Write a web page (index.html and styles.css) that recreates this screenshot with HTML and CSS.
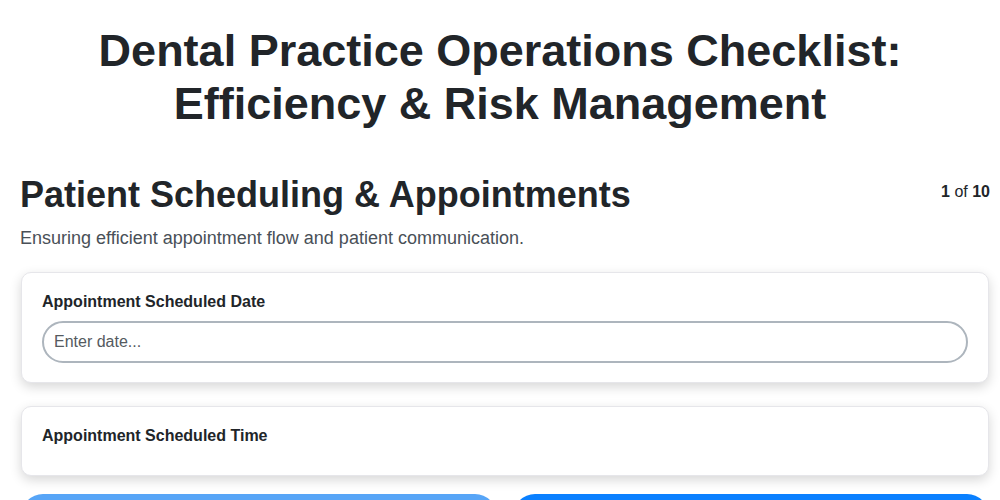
FILE: index.html
```html
<!DOCTYPE html>
<html lang="en">
<head>
<meta charset="utf-8">
<title>Dental Practice Operations Checklist</title>
<link rel="stylesheet" href="styles.css">
</head>
<body>
<div class="page">
  <h1 class="title">Dental Practice Operations Checklist: Efficiency &amp; Risk Management</h1>
  <div class="section-head">
    <h2 class="section-title">Patient Scheduling &amp; Appointments</h2>
    <div class="counter"><b>1</b> of <b>10</b></div>
  </div>
  <p class="section-desc">Ensuring efficient appointment flow and patient communication.</p>
  <div class="card">
    <label class="card-label">Appointment Scheduled Date</label>
    <input class="text-input" type="text" placeholder="Enter date...">
  </div>
  <div class="card card-last">
    <label class="card-label">Appointment Scheduled Time</label>
  </div>
  <div class="nav">
    <button class="btn btn-prev">Previous</button>
    <button class="btn btn-next">Next</button>
  </div>
</div>
</body>
</html>
```
FILE: styles.css
```css
* { box-sizing: border-box; }
body {
  margin: 0;
  font-family: "Liberation Sans", Arial, sans-serif;
  color: #212529;
  background: #fff;
}
.page {
  padding: 24px 10px 20px 20px;
}
.title {
  margin: 0 0 44px -10px;
  text-align: center;
  font-size: 45px;
  line-height: 53px;
  font-weight: 700;
  color: #212529;
}
.section-head {
  display: flex;
  justify-content: space-between;
  align-items: flex-start;
}
.section-title {
  margin: 0;
  font-size: 36px;
  line-height: 42px;
  font-weight: 700;
}
.counter {
  font-size: 16px;
  line-height: 20px;
  padding-top: 8px;
  color: #212529;
}
.section-desc {
  margin: 11px 0 23px 0;
  font-size: 18px;
  line-height: 22px;
  color: #495057;
}
.card {
  display: flex;
  flex-direction: column;
  margin: 0 1px 23px 1px;
  padding: 19px 20px;
  background: #fff;
  border: 1px solid #e6e6ea;
  border-radius: 10px;
  box-shadow: 0 4px 12px rgba(0, 0, 0, 0.16);
}
.card-last {
  padding-bottom: 20px;
}
.card-label {
  font-size: 16px;
  line-height: 19px;
  font-weight: 700;
  margin-bottom: 10px;
  color: #212529;
}
.text-input {
  height: 42px;
  border: 2px solid #adb5bd;
  border-radius: 21px;
  padding: 0 10px;
  font-family: "Liberation Sans", Arial, sans-serif;
  font-size: 16px;
  color: #212529;
  background: #fff;
  outline: none;
}
.text-input::placeholder { color: #555a60; }
.nav {
  display: flex;
  gap: 16px;
  margin: -5px 1px 0 1px;
}
.btn {
  flex: 1;
  height: 44px;
  border: none;
  border-radius: 22px;
  color: #fff;
  font-family: "Liberation Sans", Arial, sans-serif;
  font-size: 16px;
  font-weight: 700;
}
.btn-prev { background: #57a5f7; }
.btn-next { background: #0a80ff; }
```
